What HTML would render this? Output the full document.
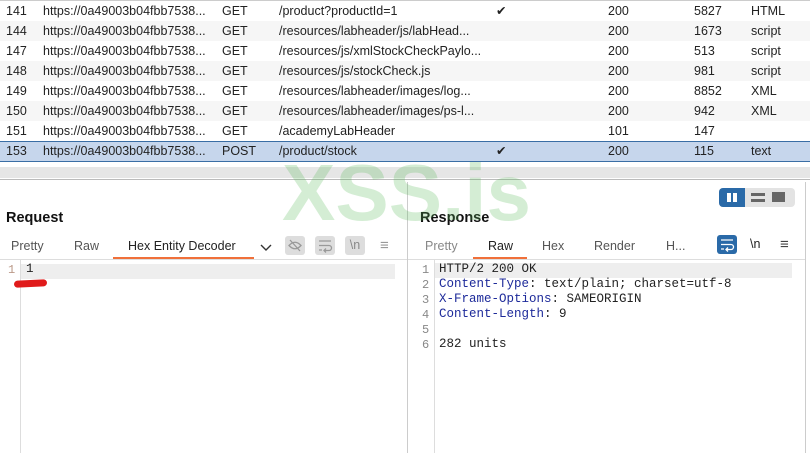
<!DOCTYPE html>
<html><head><style>
body{margin:0;width:810px;height:453px;overflow:hidden;background:#fff;font-family:"Liberation Sans",sans-serif;font-size:12.5px;color:#222;position:relative}
.r{position:absolute;left:0;width:810px;height:20px;line-height:20px}
.r span{position:absolute;white-space:nowrap}
.a{background:#f6f6f6}
.sel{background:#c6d6ec;border-top:1px solid #3a6ea5;border-bottom:1px solid #3a6ea5;height:19px;line-height:19px}
.abs{position:absolute;white-space:nowrap}
.mono{font-family:"Liberation Mono",monospace;font-size:12.5px}
.k{color:#1d2a9a}
.ln{color:#888;font-family:"Liberation Mono",monospace;font-size:12px}
</style></head><body>
<div style="position:absolute;top:0;left:0;width:810px;height:1px;background:#ccc"></div>
<div class="r" style="top:1px"><span style="left:6px">141</span><span style="left:43px">https://0a49003b04fbb7538...</span><span style="left:222px">GET</span><span style="left:279px">/product?productId=1</span><span style="left:496px">✔</span><span style="left:608px">200</span><span style="left:694px">5827</span><span style="left:751px">HTML</span></div>
<div class="r a" style="top:21px"><span style="left:6px">144</span><span style="left:43px">https://0a49003b04fbb7538...</span><span style="left:222px">GET</span><span style="left:279px">/resources/labheader/js/labHead...</span><span style="left:608px">200</span><span style="left:694px">1673</span><span style="left:751px">script</span></div>
<div class="r" style="top:41px"><span style="left:6px">147</span><span style="left:43px">https://0a49003b04fbb7538...</span><span style="left:222px">GET</span><span style="left:279px">/resources/js/xmlStockCheckPaylo...</span><span style="left:608px">200</span><span style="left:694px">513</span><span style="left:751px">script</span></div>
<div class="r a" style="top:61px"><span style="left:6px">148</span><span style="left:43px">https://0a49003b04fbb7538...</span><span style="left:222px">GET</span><span style="left:279px">/resources/js/stockCheck.js</span><span style="left:608px">200</span><span style="left:694px">981</span><span style="left:751px">script</span></div>
<div class="r" style="top:81px"><span style="left:6px">149</span><span style="left:43px">https://0a49003b04fbb7538...</span><span style="left:222px">GET</span><span style="left:279px">/resources/labheader/images/log...</span><span style="left:608px">200</span><span style="left:694px">8852</span><span style="left:751px">XML</span></div>
<div class="r a" style="top:101px"><span style="left:6px">150</span><span style="left:43px">https://0a49003b04fbb7538...</span><span style="left:222px">GET</span><span style="left:279px">/resources/labheader/images/ps-l...</span><span style="left:608px">200</span><span style="left:694px">942</span><span style="left:751px">XML</span></div>
<div class="r" style="top:121px"><span style="left:6px">151</span><span style="left:43px">https://0a49003b04fbb7538...</span><span style="left:222px">GET</span><span style="left:279px">/academyLabHeader</span><span style="left:608px">101</span><span style="left:694px">147</span></div>
<div class="r sel" style="top:141px"><span style="left:6px">153</span><span style="left:43px">https://0a49003b04fbb7538...</span><span style="left:222px">POST</span><span style="left:279px">/product/stock</span><span style="left:496px">✔</span><span style="left:608px">200</span><span style="left:694px">115</span><span style="left:751px">text</span></div>
<div style="position:absolute;top:167px;left:0;width:810px;height:11px;background:#e6e6e6"></div>
<div style="position:absolute;top:179px;left:0;width:810px;height:1px;background:#bbb"></div>
<div style="position:absolute;top:182px;left:407px;width:1px;height:271px;background:#ccc"></div>
<div style="position:absolute;top:182px;left:805px;width:1px;height:271px;background:#ccc"></div>

<div class="abs" style="left:6px;top:210px;font-weight:bold;font-size:14.5px;color:#111">Request</div>
<div class="abs" style="left:11px;top:239px;color:#555">Pretty</div>
<div class="abs" style="left:74px;top:239px;color:#555">Raw</div>
<div class="abs" style="left:128px;top:239px;color:#222">Hex Entity Decoder</div>
<div style="position:absolute;left:113px;top:257px;width:141px;height:2px;background:#f0703a"></div>
<svg class="abs" style="left:259px;top:240px" width="14" height="14"><path d="M2 5l5 5 5-5" fill="none" stroke="#333" stroke-width="1.4"/></svg>
<div class="abs" style="left:285px;top:236px;width:20px;height:19px;background:#ddd;border-radius:3px"></div>
<svg class="abs" style="left:287px;top:238px" width="16" height="15"><path d="M2 7.5Q8 1 14 7.5Q8 14 2 7.5Z" fill="none" stroke="#999" stroke-width="1.3"/><path d="M3 2l10 11" stroke="#999" stroke-width="1.3"/></svg>
<div class="abs" style="left:315px;top:236px;width:20px;height:19px;background:#ddd;border-radius:3px"></div>
<svg class="abs" style="left:317px;top:238px" width="16" height="15"><path d="M2 3h12M2 7.5h10a2.5 2.5 0 0 1 0 5H7M2 12h3M9 10.5l-2 2 2 2" fill="none" stroke="#999" stroke-width="1.3"/></svg>
<div class="abs" style="left:345px;top:236px;width:20px;height:19px;background:#ddd;border-radius:3px;color:#888;text-align:center;line-height:19px">\n</div>
<div class="abs" style="left:380px;top:237px;color:#999;font-size:15px">≡</div>
<div style="position:absolute;left:0;top:259px;width:407px;height:1px;background:#ddd"></div>
<div style="position:absolute;left:20px;top:260px;width:1px;height:193px;background:#ddd"></div>
<div style="position:absolute;left:21px;top:264px;width:374px;height:15px;background:#eee"></div>
<div class="abs ln" style="left:8px;top:263px;color:#b98">1</div>
<div class="abs mono" style="left:26px;top:262px">1</div>
<div style="position:absolute;left:14px;top:280px;width:33px;height:7px;background:#e01b1b;border-radius:4px;transform:rotate(-3deg)"></div>

<div class="abs" style="left:719px;top:188px;width:76px;height:19px;background:#e3e3e3;border-radius:4px"></div>
<div class="abs" style="left:719px;top:188px;width:26px;height:19px;background:#2a6aa8;border-radius:4px 0 0 4px"></div>
<div class="abs" style="left:727px;top:193px;width:4px;height:9px;background:#fff"></div>
<div class="abs" style="left:733px;top:193px;width:4px;height:9px;background:#fff"></div>
<div class="abs" style="left:751px;top:193px;width:14px;height:3px;background:#666"></div>
<div class="abs" style="left:751px;top:199px;width:14px;height:3px;background:#666"></div>
<div class="abs" style="left:772px;top:192px;width:13px;height:10px;background:#666"></div>
<div class="abs" style="left:420px;top:210px;font-weight:bold;font-size:14.5px;color:#111">Response</div>
<div class="abs" style="left:425px;top:239px;color:#888">Pretty</div>
<div class="abs" style="left:488px;top:239px;color:#222">Raw</div>
<div class="abs" style="left:542px;top:239px;color:#555">Hex</div>
<div class="abs" style="left:594px;top:239px;color:#555">Render</div>
<div class="abs" style="left:666px;top:239px;color:#555">H...</div>
<div style="position:absolute;left:473px;top:257px;width:54px;height:2px;background:#f0703a"></div>
<div class="abs" style="left:717px;top:235px;width:20px;height:19px;background:#2a6aa8;border-radius:3px"></div>
<svg class="abs" style="left:719px;top:237px" width="16" height="15"><path d="M2 3h12M2 7.5h10a2.5 2.5 0 0 1 0 5H7M2 12h3M9 10.5l-2 2 2 2" fill="none" stroke="#fff" stroke-width="1.3"/></svg>
<div class="abs" style="left:750px;top:237px;color:#222">\n</div>
<div class="abs" style="left:780px;top:236px;color:#444;font-size:15px">≡</div>
<div style="position:absolute;left:408px;top:259px;width:397px;height:1px;background:#ddd"></div>
<div style="position:absolute;left:434px;top:260px;width:1px;height:193px;background:#ddd"></div>
<div style="position:absolute;left:435px;top:263px;width:357px;height:15px;background:#eee"></div>
<div class="abs ln" style="left:422px;top:263px">1</div>
<div class="abs ln" style="left:422px;top:278px">2</div>
<div class="abs ln" style="left:422px;top:293px">3</div>
<div class="abs ln" style="left:422px;top:308px">4</div>
<div class="abs ln" style="left:422px;top:323px">5</div>
<div class="abs ln" style="left:422px;top:338px">6</div>
<div class="abs mono" style="left:439px;top:262px">HTTP/2 200 OK</div>
<div class="abs mono" style="left:439px;top:277px"><span class="k">Content-Type</span>: text/plain; charset=utf-8</div>
<div class="abs mono" style="left:439px;top:292px"><span class="k">X-Frame-Options</span>: SAMEORIGIN</div>
<div class="abs mono" style="left:439px;top:307px"><span class="k">Content-Length</span>: 9</div>
<div class="abs mono" style="left:439px;top:337px">282 units</div>

<div class="abs" style="left:282px;top:148px;font-size:80px;font-weight:bold;color:rgba(90,185,90,0.26);line-height:90px">XSS.is</div>
</body></html>
